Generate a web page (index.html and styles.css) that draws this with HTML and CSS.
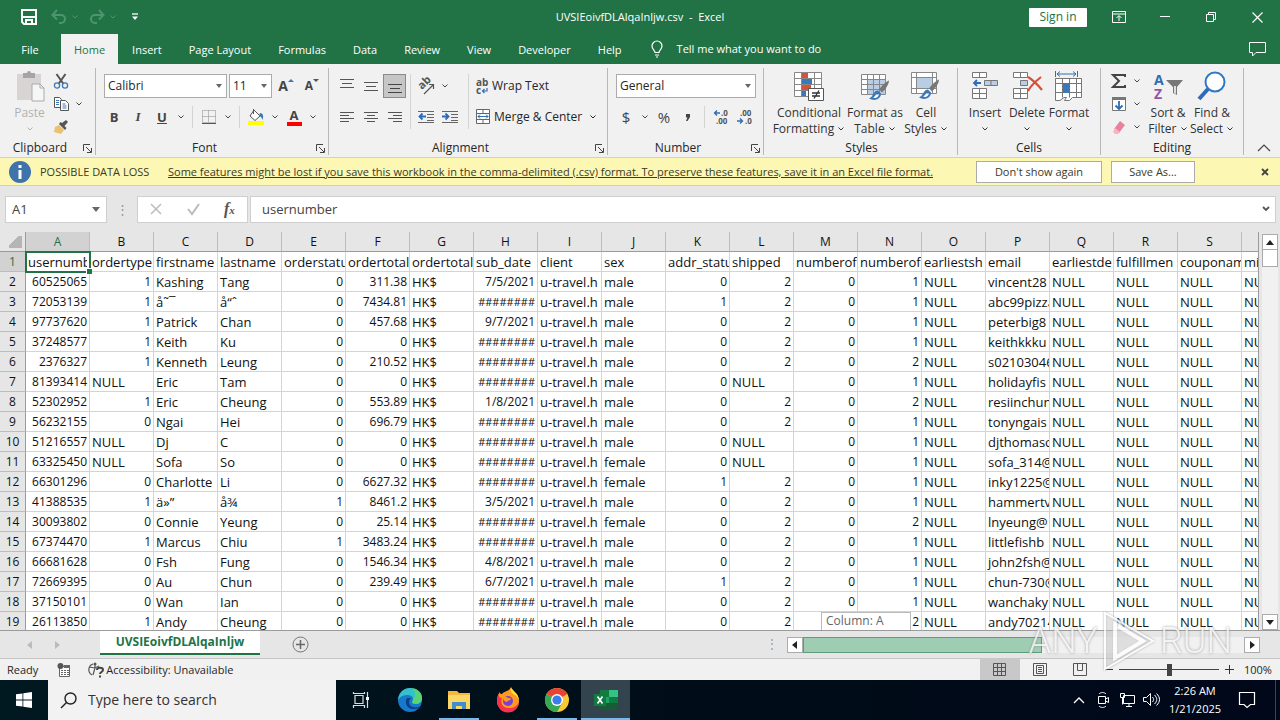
FILE: index.html
```html
<!DOCTYPE html>
<html lang="en">
<head>
    <meta charset="UTF-8">
    <meta name="viewport" content="width=device-width, initial-scale=1.0">
    <title>UVSIEoivfDLAlqaInljw.csv - Excel</title>
    <link rel="stylesheet" href="styles.css">
</head>

<body>
    <svg class="defs" aria-hidden="true">
        <symbol id="chev" viewBox="0 0 8 8"><path d="M1.500 2.500L4 5l2.500-2.500" fill="none" stroke="currentColor"/></symbol>
        <symbol id="launch" viewBox="0 0 9 9"><path d="M.5 7V.5H7M3 3l5 5M8.500 4v4.500H4" fill="none" stroke="currentColor"/></symbol>
        <symbol id="brush" viewBox="0 0 22 22"><path d="M21 1c-3 1-8 6-10 9l3 3c3-3 7-8 7-12z" fill="#777"/><path d="M10 11c-5 0-4 6-9 8 5 3 12 1 12-5z" fill="#3c78b8"/><path d="M8 15c-1 2-2 2-3 3 3 1 5 0 6-3z" fill="#fff"/></symbol>
    </svg>

    <header class="titlebar">
        <div class="quick">
            <button aria-label="Save"><svg width="16" height="16" viewBox="0 0 16 16"><path d="M1 1h14v14H3l-2-2z" fill="none" stroke="#fff" stroke-width="2"/><path d="M2 8h12M5 15v-4h6v4" fill="none" stroke="#fff" stroke-width="2"/></svg></button>
            <button class="dim" aria-label="Undo"><svg width="16" height="16" viewBox="0 0 16 16"><path d="M2 6h8a4 4 0 010 8H8M6 1L1.500 6 6 10.500" fill="none" stroke="currentColor" stroke-width="2"/></svg><svg width="8" height="8"><use href="#chev"/></svg></button>
            <button class="dim" aria-label="Redo"><svg width="16" height="16" viewBox="0 0 16 16"><path d="M14 6H6a4 4 0 000 8h2M10 1l4.500 5L10 10.500" fill="none" stroke="currentColor" stroke-width="2"/></svg><svg width="8" height="8"><use href="#chev"/></svg></button>
            <button aria-label="Customize"><svg width="8" height="8" viewBox="0 0 8 8"><path d="M1 1h6" stroke="#fff" stroke-width="1.300"/><path d="M1 3.500h6L4 7z" fill="#fff"/></svg></button>
        </div>
        <div class="doc-title">UVSIEoivfDLAlqaInljw.csv&nbsp; - &nbsp;Excel</div>
        <div class="window-buttons">
            <button class="sign-in">Sign in</button>
            <button aria-label="Ribbon display"><svg width="14" height="12" viewBox="0 0 14 12"><path d="M.5.500h13v11H.500zM.5 3h13M7 10V5M4.500 7L7 4.500 9.500 7" fill="none" stroke="#fff"/></svg></button>
            <button aria-label="Minimize"><svg width="10" height="10"><path d="M0 4.500h10" stroke="#fff"/></svg></button>
            <button aria-label="Restore"><svg width="10" height="10"><path d="M.5 2.500h7v7h-7zM2.500 2V.5h7v7H8" fill="none" stroke="#fff"/></svg></button>
            <button aria-label="Close"><svg width="11" height="11"><path d="M.5.500l10 10M10.500.500l-10 10" stroke="#fff" stroke-width="1.200"/></svg></button>
        </div>
    </header>

    <nav class="tabs">
        <button class="file">File</button>
        <button class="active">Home</button>
        <button>Insert</button>
        <button>Page Layout</button>
        <button>Formulas</button>
        <button>Data</button>
        <button>Review</button>
        <button>View</button>
        <button>Developer</button>
        <button>Help</button>
        <button class="tell"><svg width="12" height="18" viewBox="0 0 12 18"><path d="M4 12.500c0-2-3-3-3-6.500a5 5 0 0110 0c0 3.500-3 4.500-3 6.500zM4 15h4M5 17h2" fill="none" stroke="#fff" stroke-width="1.200"/></svg>Tell me what you want to do</button>
        <button class="comment" aria-label="Comments"><svg width="17" height="15" viewBox="0 0 17 15"><path d="M.5.500h16v10H7L3.500 14v-3.500h-3z" fill="none" stroke="#fff"/></svg></button>
    </nav>

    <section class="ribbon">
        <div class="group clipboard">
            <div class="group-body">
                <button class="big disabled">
                    <svg width="32" height="32" viewBox="0 0 32 32"><path d="M3 4h24v26H3z" fill="#d8d4d4"/><path d="M9 3h4a2 2 0 014 0h4v5H9z" fill="#a5a5a5"/><path d="M18 14h8l4 4v13H18z" fill="#f6f6f6" stroke="#aaa"/><path d="M26 14v4h4" fill="none" stroke="#aaa"/></svg>
                    <span>Paste</span><svg width="8" height="8"><use href="#chev"/></svg>
                </button>
                <div class="stack">
                    <button aria-label="Cut"><svg width="16" height="16" viewBox="0 0 16 16"><path d="M3.500 1l7 10M12.500 1l-7 10" stroke="#555" stroke-width="2"/><g fill="none" stroke="#3c78b8" stroke-width="1.300"><circle cx="4" cy="12.500" r="2.600"/><circle cx="12" cy="12.500" r="2.600"/></g></svg></button>
                    <button aria-label="Copy"><svg width="16" height="16" viewBox="0 0 16 16"><g fill="#fff" stroke="#555"><path d="M1.500 1.500h5l2 2v8h-7z"/><path d="M7.500 4.500h5l3 3v7h-8z"/></g><path d="M3 4.500h3M3 6.500h3M3 8.500h3M9.500 8h3M9.500 10h4M9.500 12h4" stroke="#3c78b8"/></svg><svg width="8" height="8"><use href="#chev"/></svg></button>
                    <button aria-label="Format Painter"><svg width="16" height="16" viewBox="0 0 16 16"><path d="M2 8l4-2 5 5-3 4-7-2z" fill="#ecc06c"/><path d="M6 5l6 6 1.500-2-2-2L15 3l-2-2-4 3-1.500-1z" fill="#555"/></svg></button>
                </div>
            </div>
            <div class="group-label"><span>Clipboard</span><button aria-label="Clipboard settings"><svg width="9" height="9"><use href="#launch"/></svg></button></div>
        </div>

        <div class="group font">
            <div class="group-body rows">
                <div class="row">
                    <select class="font-name" aria-label="Font"><option>Calibri</option></select>
                    <select class="font-size" aria-label="Font size"><option>11</option></select>
                    <button class="letter" aria-label="Increase font size"><b class="grow">A</b><svg width="6" height="14" viewBox="0 0 6 14"><path d="M0 4l3-3 3 3z" fill="#3c78b8"/></svg></button>
                    <button class="letter" aria-label="Decrease font size"><b>A</b><svg width="6" height="14" viewBox="0 0 6 14"><path d="M0 1h6L3 4z" fill="#555"/></svg></button>
                </div>
                <div class="row">
                    <button><b>B</b></button>
                    <button><b class="serif"><i>I</i></b></button>
                    <button><b><u>U</u></b></button>
                    <button class="drop" aria-label="Underline options"><svg width="8" height="8"><use href="#chev"/></svg></button>
                    <span class="sep"></span>
                    <button aria-label="Borders"><svg width="14" height="14" viewBox="0 0 14 14"><path d="M.5.500h13v12H.500zM6.500.500v12M.5 6.500h13" fill="none" stroke="#888" stroke-dasharray="1 1"/><path d="M0 13.500h14" stroke="#555"/></svg></button>
                    <button class="drop" aria-label="Border options"><svg width="8" height="8"><use href="#chev"/></svg></button>
                    <span class="sep"></span>
                    <button aria-label="Fill color"><svg width="18" height="18" viewBox="0 0 18 18"><path d="M7 2l6 6-5 4.500L3 8z" fill="#fff" stroke="#555"/><path d="M6.500 1v5" stroke="#555"/><path d="M13 5c3 0 4 3 2.500 7-1-3-2-4-3.500-4z" fill="#3c78b8"/><path d="M1 13h16v4H1z" fill="#ff0"/></svg></button>
                    <button class="drop" aria-label="Fill options"><svg width="8" height="8"><use href="#chev"/></svg></button>
                    <button class="color-a"><b>A</b></button>
                    <button class="drop" aria-label="Font color options"><svg width="8" height="8"><use href="#chev"/></svg></button>
                </div>
            </div>
            <div class="group-label"><span>Font</span><button aria-label="Font settings"><svg width="9" height="9"><use href="#launch"/></svg></button></div>
        </div>

        <div class="group alignment">
            <div class="group-body">
                <div class="rows">
                    <div class="row">
                        <button aria-label="Top align"><svg width="14" height="14"><path d="M0 .5h14M2 4.500h10M0 8.500h14" stroke="#555"/></svg></button>
                        <button aria-label="Middle align"><svg width="14" height="14"><path d="M0 3.500h14M2 7.500h10M0 11.500h14" stroke="#555"/></svg></button>
                        <button class="pressed" aria-label="Bottom align"><svg width="14" height="14"><path d="M0 5.500h14M2 9.500h10M0 13.500h14" stroke="#444"/></svg></button>
                    </div>
                    <div class="row">
                        <button aria-label="Align left"><svg width="14" height="14"><path d="M0 2.500h14M0 5.500h9M0 8.500h14M0 11.500h9" stroke="#555"/></svg></button>
                        <button aria-label="Center"><svg width="14" height="14"><path d="M0 2.500h14M3 5.500h8M0 8.500h14M3 11.500h8" stroke="#555"/></svg></button>
                        <button aria-label="Align right"><svg width="14" height="14"><path d="M0 2.500h14M5 5.500h9M0 8.500h14M5 11.500h9" stroke="#555"/></svg></button>
                    </div>
                </div>
                <div class="rows ruled">
                    <div class="row">
                        <button aria-label="Orientation"><svg width="18" height="18" viewBox="0 0 18 18"><text transform="translate(5 13) rotate(-45)" class="ab slant">ab</text><path d="M7 17l9-9M12 7.500h4.500V12" fill="none" stroke="#555" stroke-width="1.200"/></svg></button>
                        <button class="drop" aria-label="Orientation options"><svg width="8" height="8"><use href="#chev"/></svg></button>
                    </div>
                    <div class="row">
                        <button aria-label="Decrease indent"><svg width="16" height="14"><path d="M0 1.500h16M9 4.500h7M9 7.500h7M9 10.500h7M0 12.500h16" stroke="#666"/><path d="M8 6.500H1.500M4.500 3.500l-3 3 3 3" fill="none" stroke="#2f6cb5" stroke-width="1.800"/></svg></button>
                        <button aria-label="Increase indent"><svg width="16" height="14"><path d="M0 1.500h16M9 4.500h7M9 7.500h7M9 10.500h7M0 12.500h16" stroke="#666"/><path d="M0 6.500h6.500M3.500 3.500l3 3-3 3" fill="none" stroke="#2f6cb5" stroke-width="1.800"/></svg></button>
                    </div>
                </div>
                <div class="rows ruled">
                    <button class="wide"><svg width="14" height="16" viewBox="0 0 14 16"><text x="1" y="8" class="ab">ab</text><text x="1" y="16" class="ab">c</text><path d="M12 10v3H7.500M9.500 11l-2 2 2 2" fill="none" stroke="#2f6cb5" stroke-width="1.200"/></svg>Wrap Text</button>
                    <button class="wide"><svg width="16" height="16" viewBox="0 0 16 16"><path d="M1.500.500h13v14h-13zM1.500 4.500h13M1.500 10.500h13M8 .5v4M8 10.500v4" fill="#fff" stroke="#666"/><path d="M3 7.500h10M5 5.500l-2 2 2 2M11 5.500l2 2-2 2" fill="none" stroke="#2f6cb5"/></svg>Merge &amp; Center<svg class="far" width="8" height="8"><use href="#chev"/></svg></button>
                </div>
            </div>
            <div class="group-label"><span>Alignment</span><button aria-label="Alignment settings"><svg width="9" height="9"><use href="#launch"/></svg></button></div>
        </div>

        <div class="group number">
            <div class="group-body rows">
                <div class="row"><select class="format" aria-label="Number format"><option>General</option></select></div>
                <div class="row">
                    <button class="sign">$</button>
                    <button class="drop" aria-label="Currency options"><svg width="8" height="8"><use href="#chev"/></svg></button>
                    <button class="sign">%</button>
                    <button class="sign comma" aria-label="Comma style"><svg width="6" height="9"><path d="M1 1h4v3L2.500 8H1l1.500-3.500H1z" fill="#444"/></svg></button>
                    <span class="sep"></span>
                    <button aria-label="Increase decimal"><svg width="16" height="16" viewBox="0 0 16 16"><text x="8" y="7" class="dec">.0</text><text x="3" y="15" class="dec">.00</text><path d="M7 4H1.500M4 1.500L1.500 4 4 6.500" fill="none" stroke="#2f6cb5" stroke-width="1.300"/></svg></button>
                    <button aria-label="Decrease decimal"><svg width="16" height="16" viewBox="0 0 16 16"><text x="3" y="7" class="dec">.00</text><text x="8" y="15" class="dec">.0</text><path d="M0 12h5.500M3 9.500L5.500 12 3 14.500" fill="none" stroke="#2f6cb5" stroke-width="1.300"/></svg></button>
                </div>
            </div>
            <div class="group-label"><span>Number</span><button aria-label="Number settings"><svg width="9" height="9"><use href="#launch"/></svg></button></div>
        </div>

        <div class="group styles">
            <div class="group-body">
                <button class="big cond">
                    <svg width="32" height="32" viewBox="0 0 32 32"><path d="M1.500 2.500h27v24h-27zM1.500 8.500h27M1.500 14.500h27M1.500 20.500h27M8.500 2.500v24M21.500 2.500v24" fill="#fff" stroke="#888"/><path d="M9 3h6v5H9zM9 15h9v5H9z" fill="#d6503a"/><path d="M9 9h10v5H9zM9 21h4v5H9z" fill="#3c78b8"/><path d="M15.500 18.500h15v12h-15z" fill="#fff" stroke="#555"/><path d="M19 23h8M19 26h8M26 20.500l-5 8" stroke="#333" stroke-width="1.300"/></svg>
                    <span>Conditional<br>Formatting <svg width="8" height="8"><use href="#chev"/></svg></span>
                </button>
                <button class="big as-table">
                    <svg width="32" height="32" viewBox="0 0 32 32"><path d="M2.500 4.500h24v20h-24z" fill="#fff"/><path d="M9 10h17v14H9z" fill="#b9cee4"/><path d="M2.500 4.500h24v20h-24zM2.500 9.500h24M2.500 14.500h24M2.500 19.500h24M8.500 4.500v20M14.500 4.500v20M20.500 4.500v20" fill="none" stroke="#888"/><use href="#brush" x="9" y="9" width="22" height="23"/></svg>
                    <span>Format as<br>Table <svg width="8" height="8"><use href="#chev"/></svg></span>
                </button>
                <button class="big">
                    <svg width="32" height="32" viewBox="0 0 32 32"><path d="M1.500 2.500h25v21h-25zM1.500 7.500h25M1.500 18.500h25M6.500 2.500v21M22.500 2.500v21" fill="#fff" stroke="#888"/><path d="M7 8h15v10H7z" fill="#b9cee4"/><use href="#brush" x="8" y="8" width="22" height="23"/></svg>
                    <span>Cell<br>Styles <svg width="8" height="8"><use href="#chev"/></svg></span>
                </button>
            </div>
            <div class="group-label"><span>Styles</span></div>
        </div>

        <div class="group cells">
            <div class="group-body">
                <button class="big">
                    <svg width="32" height="32" viewBox="0 0 32 32"><g fill="#fff" stroke="#777"><path d="M3.500 2.500h14v5h-14zM10.500 2.500v5"/><path d="M3.500 18.500h14v10h-14zM10.500 18.500v10M3.500 23.500h14"/></g><path d="M15.500 10.500h13v5h-13zM22 10.500v5" fill="#b9cee4" stroke="#777"/><path d="M12 13H5M8 10l-3 3 3 3" fill="none" stroke="#2f6cb5" stroke-width="1.800"/></svg>
                    <span>Insert</span><svg width="8" height="8"><use href="#chev"/></svg>
                </button>
                <button class="big">
                    <svg width="32" height="32" viewBox="0 0 32 32"><g fill="#fff" stroke="#777"><path d="M2.500 2.500h14v5h-14zM9.500 2.500v5"/><path d="M2.500 18.500h14v10h-14zM9.500 18.500v10M2.500 23.500h14"/></g><path d="M9.500 10.500h7v5h-7z" fill="#b9cee4" stroke="#777"/><path d="M17 7c5 3 10 8 14 13M30 7c-5 4-10 8-13 14" fill="none" stroke="#d6503a" stroke-width="2.200"/></svg>
                    <span>Delete</span><svg width="8" height="8"><use href="#chev"/></svg>
                </button>
                <button class="big">
                    <svg width="32" height="32" viewBox="0 0 32 32"><path d="M2.500 1v6M24.500 1v6M4 4h19M7 1.500L4 4l3 2.500M20 1.500L23 4l-3 2.500" fill="none" stroke="#2f6cb5"/><path d="M2.500 8.500h26v19h-9l-3 3h-5l2-3H11l-4 3H2.500zM2.500 13.500h26M2.500 22.500h26M9.500 8.500v19M16.500 8.500v19M23.500 8.500v19" fill="#fff" stroke="#777"/><path d="M10 13h7v10h-7z" fill="#3c78b8"/></svg>
                    <span>Format</span><svg width="8" height="8"><use href="#chev"/></svg>
                </button>
            </div>
            <div class="group-label"><span>Cells</span></div>
        </div>

        <div class="group editing">
            <div class="group-body">
                <div class="stack">
                    <button aria-label="AutoSum"><svg width="16" height="16" viewBox="0 0 16 16"><path d="M14 4V2H2l6 6-6 6h12v-2" fill="none" stroke="#444" stroke-width="2"/></svg><svg width="8" height="8"><use href="#chev"/></svg></button>
                    <button aria-label="Fill"><svg width="16" height="16" viewBox="0 0 16 16"><path d="M1.500 1.500h13v13h-13z" fill="#fff" stroke="#777"/><path d="M1 1h14v3H1z" fill="#777"/><path d="M8 5v8M4.500 9.500L8 13l3.500-3.500" fill="none" stroke="#2f6cb5" stroke-width="1.800"/></svg><svg width="8" height="8"><use href="#chev"/></svg></button>
                    <button aria-label="Clear"><svg width="16" height="16" viewBox="0 0 16 16"><path d="M9 2l5 4-6 8-5-4z" fill="#e8829c"/><path d="M4 9l5 4-2 2H4l-2-2z" fill="#f3b7c4"/></svg><svg width="8" height="8"><use href="#chev"/></svg></button>
                </div>
                <button class="big">
                    <svg width="32" height="32" viewBox="0 0 32 32"><text x="2" y="15" class="sort-a">A</text><text x="2" y="29" class="sort-z">Z</text><path d="M14 10h17l-6 7v8l-4-2v-6z" fill="#777"/><path d="M22 16v7l2 1v-8z" fill="#ddd"/></svg>
                    <span>Sort &amp;<br>Filter <svg width="8" height="8"><use href="#chev"/></svg></span>
                </button>
                <button class="big">
                    <svg width="32" height="32" viewBox="0 0 32 32"><circle cx="19" cy="12" r="9.500" fill="#fff" stroke="#2f78c4" stroke-width="2"/><path d="M12 19L3 29" stroke="#2f6cb5" stroke-width="4"/></svg>
                    <span>Find &amp;<br>Select <svg width="8" height="8"><use href="#chev"/></svg></span>
                </button>
            </div>
            <div class="group-label"><span>Editing</span></div>
        </div>
        <button class="collapse" aria-label="Collapse ribbon"><svg width="14" height="8"><path d="M1 7l6-6 6 6" fill="none" stroke="#444" stroke-width="1.200"/></svg></button>
    </section>

    <section class="message">
        <svg width="24" height="24" viewBox="0 0 24 24"><circle cx="12" cy="12" r="11" fill="#3f73ac"/><path d="M12 5v3M12 10v9" stroke="#fff" stroke-width="3"/></svg>
        <strong>POSSIBLE DATA LOSS</strong>
        <div class="message-text"><a href="#">Some features might be lost if you save this workbook in the comma-delimited (.csv) format. To preserve these features, save it in an Excel file format.</a></div>
        <button class="again">Don't show again</button>
        <button class="save-as">Save As...</button>
        <button class="close" aria-label="Close message"><svg width="8" height="8"><path d="M1 1l6 6M7 1L1 7" stroke="#444" stroke-width="1.800"/></svg></button>
    </section>

    <section class="formula-bar">
        <div class="name-box">
            <input type="text" value="A1" aria-label="Name box">
            <button aria-label="Names"><svg width="8" height="5"><path d="M0 0h8L4 5z" fill="#666"/></svg></button>
        </div>
        <span class="grip">⋮</span>
        <div class="fx">
            <button aria-label="Cancel"><svg width="12" height="12"><path d="M1 1l10 10M11 1L1 11" stroke="#bbb" stroke-width="1.500"/></svg></button>
            <button aria-label="Enter"><svg width="13" height="12"><path d="M1 6l4 5 7-10" fill="none" stroke="#bbb" stroke-width="2"/></svg></button>
            <button class="fx-label"><i>f<small>x</small></i></button>
        </div>
        <div class="formula">
            <input type="text" value="usernumber" aria-label="Formula">
            <button aria-label="Expand formula bar"><svg width="8" height="6"><path d="M1 1l3 3 3-3" fill="none" stroke="#555" stroke-width="1.800"/></svg></button>
        </div>
    </section>

    <main class="sheet-area">
        <div class="sheet">
            <table>
                <thead><tr id="letters"></tr></thead>
                <tbody id="cells"></tbody>
            </table>
            <div class="hint">Column: A</div>
        </div>
        <div class="v-scroll">
            <button aria-label="Scroll up"><svg width="8" height="5"><path d="M0 5h8L4 0z" fill="#222"/></svg></button>
            <div class="v-thumb"></div>
            <div class="v-track"></div>
            <button aria-label="Scroll down"><svg width="8" height="5"><path d="M0 0h8L4 5z" fill="#222"/></svg></button>
        </div>
    </main>

    <footer class="sheet-tabs">
        <button class="arrow" aria-label="Previous sheet"><svg width="5" height="8"><path d="M5 0v8L0 4z" fill="#bbb"/></svg></button>
        <button class="arrow" aria-label="Next sheet"><svg width="5" height="8"><path d="M0 0v8l5-4z" fill="#bbb"/></svg></button>
        <button class="sheet-tab">UVSIEoivfDLAlqaInljw</button>
        <button class="add" aria-label="New sheet"><svg width="17" height="17"><path d="M8.500 4v9M4 8.500h9" stroke="#666" stroke-width="1.500"/><circle cx="8.500" cy="8.500" r="7.500" fill="none" stroke="#777"/></svg></button>
        <span class="grip">⋮</span>
        <div class="h-scroll">
            <button aria-label="Scroll left"><svg width="5" height="8"><path d="M5 0v8L0 4z" fill="#222"/></svg></button>
            <div class="h-thumb"></div>
            <div class="h-track"></div>
            <button aria-label="Scroll right"><svg width="5" height="8"><path d="M0 0v8l5-4z" fill="#222"/></svg></button>
        </div>
    </footer>

    <footer class="status">
        <span class="ready">Ready</span>
        <svg class="macro" width="14" height="14" viewBox="0 0 14 14"><path d="M2.500 3.500h10v10h-10z" fill="#fff" stroke="#666"/><path d="M7 2h6v3H7z" fill="#666"/><path d="M4 7.500h2M7 7.500h2M10 7.500h2M4 9.500h2M7 9.500h2M10 9.500h2M4 11.500h2M7 11.500h2M10 11.500h2" stroke="#666"/><circle cx="3.500" cy="3" r="3" fill="#555"/></svg>
        <svg class="access" width="18" height="16" viewBox="0 0 18 16"><path d="M6 2a6 6 0 00-1 11M2 5l6 1 4-2M8 2v4l-2 7" fill="none" stroke="#555" stroke-width="1.200"/><circle cx="8" cy="2" r="1.500" fill="#555"/><path d="M10 8c0-3 6-3 6 0 0 2-3 2-3 4M13 13.500v2" fill="none" stroke="#444" stroke-width="2"/></svg>
        <span>Accessibility: Unavailable</span>
        <div class="views">
            <button class="on" aria-label="Normal"><svg width="14" height="13"><path d="M.5.500h12v12H.500zM.5 4.500h12M.5 8.500h12M4.500.500v12M8.500.500v12" fill="none" stroke="#555"/></svg></button>
            <button aria-label="Page layout"><svg width="14" height="13"><path d="M.5.500h13v12H.500zM3.500 2.500h7v8h-7zM5 4.500h4M5 6.500h4M5 8.500h4" fill="none" stroke="#555"/></svg></button>
            <button aria-label="Page break preview"><svg width="14" height="13"><path d="M.5.500h13v12H.500zM4.500.500v7h5v-7" fill="none" stroke="#555"/></svg></button>
        </div>
        <div class="zoom">
            <button aria-label="Zoom out"><svg width="8" height="8"><path d="M0 3.500h8" stroke="#333"/></svg></button>
            <input type="range" min="0" max="200" value="100" aria-label="Zoom">
            <button aria-label="Zoom in"><svg width="9" height="9"><path d="M0 4.500h9M4.500 0v9" stroke="#333"/></svg></button>
            <button class="percent">100%</button>
        </div>
    </footer>

    <div class="taskbar">
        <button class="start" aria-label="Start"><svg width="16" height="16" viewBox="0 0 16 16"><path d="M0 2.300l6.500-.9v6.200H0zM7.300 1.300L16 0v7.600H7.300zM0 8.400h6.500v6.200L0 13.700zM7.300 8.400H16V16l-8.700-1.300z" fill="#fff"/></svg></button>
        <label class="search"><svg width="17" height="17"><circle cx="10.500" cy="6.500" r="5.500" fill="none" stroke="#222" stroke-width="1.400"/><path d="M6.500 10.500L1 16" stroke="#222" stroke-width="1.400"/></svg><input type="text" placeholder="Type here to search"></label>
        <button class="app" aria-label="Task view"><svg width="18" height="18" viewBox="0 0 18 18"><path d="M3 4.500h8v8H3zM1.500 1v1.500h11V1M1.500 17v-2.500h11V17M15.500 1v16" fill="none" stroke="#ddd" stroke-width="1.200"/><path d="M14 6h3v3h-3z" fill="#fff"/></svg></button>
        <button class="app" aria-label="Edge"><svg width="26" height="26" viewBox="0 0 26 26"><circle cx="13" cy="13" r="12" fill="#1778cc"/><path d="M1 13C2 5 7 1 13 1c8 0 12 5 12 10 0 4-3 6-6 6-3 0-4-1-4-2 0-1 1-1 1-3 0-3-3-4-6-4-5 0-8 3-9 5z" fill="#35c1c9"/><path d="M15 1.200C21 2 25 6 25 11c0 4-3 6-6 6-3 0-4-1-4-2 0-1 1-1 1-3 3-2 3-7-1-10.800z" fill="#62d95a" opacity=".75"/><path d="M10 11c-3 5 0 12 8 11 2 0 4-1 5-3-5 3-11 1-11-4 0-2 1-3 2-4z" fill="#0b3f8c"/></svg></button>
        <button class="app open" aria-label="File Explorer"><svg width="22" height="20" viewBox="0 0 22 20"><path d="M0 1h9l2 2h11v16H0z" fill="#f5b83a"/><path d="M0 5h22v14H0z" fill="#fdd765"/><path d="M4 19v-7h14v7h-4v-3H8v3z" fill="#3e8fcb"/></svg></button>
        <button class="app" aria-label="Firefox"><svg width="24" height="26" viewBox="0 0 24 26"><path d="M15 0c0 3 8 6 8 14a11 11 0 01-22 0c0-4 1-7 3-9 0 2 1 2 2 2 2-3 7-2 9-7z" fill="#ff9a1f"/><path d="M1 14a11 11 0 0022 1c-2 4-5 6-10 6-6 0-9-4-7-10-3 0-4-2-2-5-2 2-3 5-3 8z" fill="#f5334f"/><path d="M15 0c0 3 8 6 8 14-1-4-3-6-6-7-2-2-3-4-2-7z" fill="#ffdf3c"/><circle cx="12" cy="14" r="5" fill="#7a42d4"/><path d="M7 10c2-1 4 0 5 1 2 0 3 0 3 1-1 2-3 1-4 3-2 0-4-2-4-5z" fill="#ff9a1f"/></svg></button>
        <button class="app open" aria-label="Chrome"><svg width="24" height="24" viewBox="0 0 24 24"><circle cx="12" cy="12" r="12" fill="#fcc934"/><path d="M12 12L1.600 6A12 12 0 0122.400 6z" fill="#ea4335"/><path d="M12 12L1.600 6a12 12 0 0010.400 18l5.200-9z" fill="#34a853"/><circle cx="12" cy="12" r="6" fill="#fff"/><circle cx="12" cy="12" r="4.600" fill="#3b7ded"/></svg></button>
        <button class="app current" aria-label="Excel"><svg width="24" height="22" viewBox="0 0 24 22"><path d="M6 1h18v20H6z" fill="#21a366"/><path d="M6 1h9v7H6z" fill="#107c41"/><path d="M15 1h9v7h-9z" fill="#33c481"/><path d="M6 14h18v7H6z" fill="#185c37"/><path d="M15 8h9v6h-9z" fill="#107c41"/><path d="M0 5h12v12H0z" fill="#107c41"/><path d="M3.500 7.500l5 7M8.500 7.500l-5 7" stroke="#fff" stroke-width="1.600"/></svg></button>
        <div class="tray">
            <button aria-label="Hidden icons"><svg width="12" height="8"><path d="M1 7l5-5 5 5" fill="none" stroke="#fff" stroke-width="1.300"/></svg></button>
            <button aria-label="Meet now"><svg width="14" height="18"><path d="M2.500 5.500h7v7h-7zM9.500 8l3-1.500v5l-3-1.500M3 3c2-2 5-2 7 0M3 15c2 2 5 2 7 0" fill="none" stroke="#fff"/></svg></button>
            <button aria-label="Network"><svg width="17" height="16"><path d="M4.500 3.500h11v8h-11zM10 11.500v3M7 14.500h6M1.500 1.500h4v4h-4zM3.500 5.500v7" fill="none" stroke="#fff"/></svg></button>
            <button aria-label="Volume"><svg width="18" height="16"><path d="M1.500 5.500h3l4-4v12l-4-4h-3zM10.500 5c1.500 2 1.500 3 0 5M12.500 3c3 3 3 6 0 9M14.500 1.500c4 4 4 8 0 12" fill="none" stroke="#fff"/></svg></button>
            <div class="clock">2:26 AM<br>1/21/2025</div>
            <button class="action" aria-label="Notifications"><svg width="16" height="17"><path d="M.5.500h15v12h-4L8 15.500 5 12.500H.500z" fill="none" stroke="#fff" stroke-width="1.200"/></svg></button>
        </div>
    </div>

    <div class="watermark" aria-hidden="true">
        <span>ANY</span>
        <svg width="56" height="62" viewBox="0 0 56 62"><path d="M4 3v56l48-28z" fill="#ddd" fill-opacity=".35" stroke="#fff" stroke-width="2"/><path d="M14 14v34l28-17z" fill="#fff" fill-opacity=".3" stroke="#fff" stroke-width="4"/></svg>
        <span>RUN</span>
    </div>

    <script src="script.js"></script>
</body>
</html>
```
FILE: styles.css
```css
* {
    box-sizing: border-box;
}

body {
    margin: 0;
    height: 100vh;
    display: flex;
    flex-direction: column;
    overflow: hidden;
    background-color: #e6e6e6;
    color: #262626;
    font-family: "Open Sans", "Noto Sans", sans-serif;
    font-size: 12px;
    line-height: 16px;
    white-space: nowrap;
}

button,
input,
select {
    font: inherit;
    color: inherit;
    margin: 0;
    padding: 0;
    border: 0;
    border-radius: 0;
    background: none;
    outline: none;
}

button {
    display: flex;
    align-items: center;
    justify-content: center;
    flex-shrink: 0;
}

svg {
    flex-shrink: 0;
    overflow: visible;
}

.defs {
    position: absolute;
    width: 0;
    height: 0;
}

/* title bar */
.titlebar {
    height: 34px;
    flex-shrink: 0;
    display: grid;
    grid-template-columns: 1fr auto 1fr;
    align-items: center;
    background-color: #217346;
    color: #fff;
    font-size: 11px;
}

.quick {
    display: flex;
    align-items: center;
    gap: 14px;
    padding-left: 21px;
}

.quick .dim {
    color: #4f9470;
    gap: 4px;
    margin-right: -4px;
}

.quick button:last-child {
    margin-left: 4px;
}

.window-buttons {
    display: flex;
    justify-content: flex-end;
    align-items: center;
}

.window-buttons button {
    width: 46px;
    height: 30px;
}

.window-buttons .sign-in {
    width: 58px;
    height: 19px;
    margin-right: 9px;
    background-color: #fff;
    color: #217346;
    font-size: 12px;
    border-radius: 1px;
}

/* ribbon tabs */
.tabs {
    height: 30px;
    flex-shrink: 0;
    display: flex;
    gap: 1px;
    background-color: #217346;
    color: #fff;
    font-size: 11px;
}

.tabs button {
    padding: 1px 13px 0;
}

.tabs .file {
    width: 60px;
}

.tabs .active {
    background-color: #f1f1f1;
    color: #217346;
}

.tabs .tell {
    padding: 0 15px;
    gap: 14px;
}

.tabs .comment {
    margin-left: auto;
    padding-right: 14px;
}

/* ribbon */
.ribbon {
    height: 93px;
    flex-shrink: 0;
    display: flex;
    padding: 4px 0 2px;
    background-color: #f1f1f1;
}

.ribbon button {
    color: #444;
}

.group {
    display: flex;
    flex-direction: column;
    padding-left: 6px;
    border-right: 1px solid #b8b8b8;
}

.clipboard { flex: 0 0 96px; }
.font { flex: 0 0 233px; }
.alignment { flex: 0 0 279px; }
.number { flex: 0 0 156px; }
.styles { flex: 0 0 194px; }
.cells { flex: 0 0 143px; }
.editing { flex: 0 0 143px; }

.group-body {
    flex: 1;
    display: flex;
    align-items: flex-start;
}

.group-label {
    height: 14px;
    display: flex;
    align-items: center;
    color: #262626;
    margin-left: -6px;
}

.group-label span {
    flex: 1;
    text-align: center;
}

.group-label button {
    width: 15px;
    height: 14px;
}

.rows {
    display: flex;
    flex-direction: column;
    align-items: flex-start;
    gap: 7px;
    padding-top: 6px;
}

.row {
    display: flex;
    align-items: center;
    height: 24px;
}

.row button {
    width: 24px;
    height: 24px;
}

.row .drop {
    width: 14px;
}

.row b {
    font-size: 13px;
}

.sep {
    width: 1px;
    height: 22px;
    margin: 0 4px;
    background-color: #d4d4d4;
}

.ruled {
    margin: 6px 0 0 3px;
    padding: 0 3px;
    border-left: 1px solid #d4d4d4;
}

.ribbon select {
    height: 24px;
    padding-left: 3px;
    border: 1px solid #ababab;
    color: #262626;
    appearance: none;
    background: #fff url("data:image/svg+xml,%3Csvg xmlns='http://www.w3.org/2000/svg' width='6' height='4'%3E%3Cpath d='M0 0h6L3 4z' fill='%23666'/%3E%3C/svg%3E") no-repeat right 4px center;
}

.font .row:first-child {
    gap: 2px;
    padding-left: 2px;
}

.ribbon .font-name {
    width: 123px;
}

.ribbon .font-size {
    width: 43px;
}

.letter svg {
    align-self: flex-start;
    margin-top: 4px;
}

.row .letter b {
    font-size: 12px;
}

.row .letter .grow {
    font-size: 14px;
}

.serif {
    font-family: "Liberation Serif", serif;
}

.color-a b {
    width: 15px;
    height: 17px;
    line-height: 13px;
    border-bottom: 4px solid #f00;
}

.row .pressed {
    background-color: #c6c6c6;
    border: 1px solid #8a8a8a;
    width: 23px;
}

.ab {
    font: bold 10px "Open Sans", sans-serif;
    fill: #555;
}

.slant {
    font-size: 11px;
}

.dec {
    font: bold 8px "Open Sans", sans-serif;
    fill: #555;
}

.wide {
    height: 24px;
    gap: 3px;
    padding-left: 3px;
}

.ribbon .wide {
    color: #262626;
}

.far {
    margin-left: 4px;
}

.ribbon .format {
    width: 140px;
    margin-left: 2px;
}

.row .sign {
    font-size: 15px;
}

.stack {
    display: flex;
    flex-direction: column;
    align-items: flex-start;
    padding-top: 1px;
}

.stack button {
    height: 23px;
    gap: 6px;
}

.big {
    flex-direction: column;
    justify-content: flex-start;
    width: 44px;
    padding-top: 2px;
}

.big > svg:first-child {
    margin-bottom: 3px;
}

.big > svg:last-child {
    margin-top: 4px;
}

.ribbon .big {
    color: #333;
}

.ribbon .disabled {
    color: #b1b1b1;
    width: 47px;
}

.cells .big {
    width: 42px;
}

.styles {
    padding-left: 8px;
}

.ribbon .cond {
    width: 74px;
}

.ribbon .as-table {
    width: 58px;
}

.editing .stack {
    width: 39px;
    padding-left: 4px;
}

.sort-a {
    font: bold 14px "Open Sans", sans-serif;
    fill: #2f6cb5;
}

.sort-z {
    font: bold 14px "Open Sans", sans-serif;
    fill: #9355a8;
}

.collapse {
    margin-left: auto;
    align-self: flex-end;
    width: 32px;
    height: 14px;
}

/* message bar */
.message {
    height: 29px;
    flex-shrink: 0;
    display: flex;
    align-items: center;
    padding: 0 8px;
    background-color: #fdf7b4;
    border-top: 1px solid #d9d3a0;
    border-bottom: 1px solid #d9d3a0;
    font-size: 11px;
    color: #3b3a24;
}

.message strong {
    width: 120px;
    font-weight: normal;
    margin: 0 8px;
}

.message-text {
    width: 787px;
}

.message a {
    color: inherit;
}

.message .again,
.message .save-as {
    height: 22px;
    background-color: #fff;
    border: 1px solid #ababab;
}

.message .again {
    width: 126px;
    margin: 0 9px 0 21px;
}

.message .save-as {
    width: 84px;
}

.message .close {
    width: 14px;
    margin-left: auto;
}

/* formula bar */
.formula-bar {
    height: 46px;
    flex-shrink: 0;
    display: flex;
    align-items: center;
    padding: 0 4px 0 5px;
    font-size: 13px;
    color: #444;
}

.name-box,
.fx,
.formula {
    height: 27px;
    display: flex;
    background-color: #fff;
    border: 1px solid #cfcfcf;
}

.name-box {
    width: 102px;
}

.name-box input {
    width: 80px;
    padding-left: 6px;
}

.name-box button {
    width: 20px;
}

.grip {
    width: 30px;
    text-align: center;
    color: #999;
}

.fx {
    width: 111px;
    justify-content: space-around;
}

.fx-label {
    font-family: "Liberation Serif", serif;
    font-weight: bold;
    font-size: 16px;
    color: #555;
}

.fx-label small {
    font-size: 11px;
}

.formula {
    flex: 1;
    margin-left: 2px;
}

.formula input {
    flex: 1;
    padding-left: 11px;
}

.formula button {
    width: 18px;
}

/* grid */
.sheet-area {
    flex: 1;
    min-height: 0;
    display: flex;
    border-bottom: 1px solid #9b9b9b;
}

.sheet {
    flex: 1;
    min-width: 0;
    position: relative;
    overflow: hidden;
    border-right: 1px solid #9b9b9b;
}

table {
    table-layout: fixed;
    width: max-content;
    border-collapse: separate;
    border-spacing: 0;
    color: #111;
}

th,
td {
    width: 64px;
    min-width: 64px;
    max-width: 64px;
    height: 20px;
    padding: 1px 2px 0;
    overflow: hidden;
    line-height: 18px;
    border-right: 1px solid #d4d4d4;
    border-bottom: 1px solid #d4d4d4;
}

th {
    font-weight: normal;
    background-color: #e6e6e6;
    border-color: #bdbdbd;
}

thead th {
    border-bottom-color: #9b9b9b;
}

th:first-child {
    width: 26px;
    min-width: 26px;
    max-width: 26px;
    padding: 1px 0 0;
    border-right-color: #9b9b9b;
}

.corner {
    background: linear-gradient(135deg, #e6e6e6 50%, #b5b5b5 50%);
    background-clip: content-box;
}

thead .corner:first-child {
    padding: 4px 3px 3px 9px;
}

th.chosen {
    background-color: #d2d2d2;
    color: #217346;
}

td {
    background-color: #fff;
    font-size: 13px;
}

td.num {
    text-align: right;
    font-size: 12px;
}

td.hash {
    text-align: right;
    font-size: 11px;
}

td.cursor {
    position: relative;
    overflow: visible;
    outline: 2px solid #217346;
    outline-offset: -1px;
}

td.cursor div {
    overflow: hidden;
}

td.cursor::after {
    content: "";
    position: absolute;
    right: -3px;
    bottom: -3px;
    width: 5px;
    height: 5px;
    background-color: #217346;
    border: 1px solid #fff;
    border-width: 1px 0 0 1px;
    box-sizing: content-box;
}

.hint {
    position: absolute;
    left: 821px;
    bottom: 0;
    width: 90px;
    height: 18px;
    padding-left: 4px;
    background-color: #fff;
    border: 1px solid #bbb;
    border-bottom: 0;
    color: #666;
}

.v-scroll {
    width: 21px;
    display: flex;
    flex-direction: column;
    padding: 2px 2px 0 3px;
}

.v-scroll button,
.h-scroll button {
    width: 16px;
    height: 16px;
    background-color: #fff;
    border: 1px solid #ababab;
}

.v-thumb {
    width: 16px;
    height: 17px;
    background-color: #fff;
    border: 1px solid #ababab;
    border-top: 0;
}

.v-track {
    flex: 1;
    width: 16px;
    background-color: #f1f1f1;
}

/* sheet tabs */
.sheet-tabs {
    height: 28px;
    flex-shrink: 0;
    display: flex;
    padding: 0 20px 0 15px;
    border-bottom: 1px solid #c6c6c6;
}

.arrow {
    width: 28px;
}

.sheet-tab {
    height: 24px;
    width: 160px;
    margin-left: 29px;
    background-color: #fff;
    border-bottom: 2px solid #217346;
    color: #217346;
    font-weight: bold;
}

.add {
    margin-left: 32px;
}

.sheet-tabs .grip {
    margin-left: auto;
    line-height: 26px;
}

.h-scroll {
    width: 38%;
    max-width: 475px;
    display: flex;
    align-items: center;
}

.h-thumb {
    flex: 54;
    height: 16px;
    background-color: #9fcdb3;
    border: 1px solid #5f9a7a;
}

.h-track {
    flex: 46;
    height: 16px;
    background-color: #f1f1f1;
}

/* status bar */
.status {
    height: 21px;
    flex-shrink: 0;
    display: flex;
    align-items: center;
    padding-left: 7px;
    background-color: #f1f1f1;
    font-size: 11px;
}

.macro {
    margin: 0 16px 0 19px;
}

.access {
    margin-right: 1px;
}

.views {
    display: flex;
    margin-left: auto;
    height: 21px;
}

.views button {
    width: 40px;
}

.views .on {
    background-color: #c8c8c8;
}

.zoom {
    display: flex;
    align-items: center;
    gap: 6px;
    width: 180px;
    padding-left: 5px;
}

.zoom input {
    width: 100px;
    height: 12px;
    appearance: none;
    background: linear-gradient(#444, #444) no-repeat center / 100% 1px;
}

.zoom input::-webkit-slider-thumb {
    appearance: none;
    width: 5px;
    height: 12px;
    background-color: #444;
}

.percent {
    margin-left: 4px;
}

/* taskbar */
.taskbar {
    height: 40px;
    flex-shrink: 0;
    display: flex;
    background: linear-gradient(90deg, #001820, #000c18 60%, #00081a);
    color: #fff;
}

.start {
    width: 48px;
}

.search {
    width: 288px;
    display: flex;
    align-items: center;
    gap: 11px;
    padding-left: 12px;
    background-color: #f2f2f2;
    color: #222;
}

.search input {
    flex: 1;
    min-width: 0;
    font-size: 14px;
}

.search input::placeholder {
    color: #333;
    opacity: 1;
}

.app {
    width: 49px;
}

.open {
    background: linear-gradient(#76b9ed, #76b9ed) no-repeat center bottom / 40px 2px;
}

.current {
    background: #33444f linear-gradient(#76b9ed, #76b9ed) no-repeat center bottom / 100% 2px;
}

.tray {
    margin-left: auto;
    display: flex;
    align-items: center;
    padding-right: 4px;
}

.tray button {
    width: 24px;
    height: 40px;
}

.clock {
    width: 64px;
    text-align: center;
    line-height: 18px;
    font-size: 11px;
}

.tray .action {
    width: 49px;
    padding-right: 8px;
    border-right: 1px solid #3a4550;
}

/* logo that lies over the lower right corner */
.watermark {
    position: absolute;
    right: 48px;
    bottom: 48px;
    display: flex;
    align-items: center;
    gap: 3px;
    color: #f4f4f4;
    opacity: 0.8;
    font-family: Roboto, sans-serif;
    font-weight: 300;
    font-size: 36px;
    line-height: 60px;
    text-shadow: 0 0 3px #888;
    pointer-events: none;
}

.watermark svg {
    filter: drop-shadow(0 0 1px #999);
}
```
FILE: script.js
```javascript
const heads = ['usernumber', 'ordertype', 'firstname', 'lastname', 'orderstatus', 'ordertotal', 'ordertotal', 'sub_date', 'client', 'sex', 'addr_status', 'shipped', 'numberof', 'numberof', 'earliestsh', 'email', 'earliestde', 'fulfillmen', 'couponam', 'mi'];

// usernumber, ordertype, firstname, lastname, orderstatus, ordertotal, sub_date, sex, addr_status, shipped, numberof, email
const orders = [
    ['60525065', '1', 'Kashing', 'Tang', '0', '311.38', '7/5/2021', 'male', '0', '2', '1', 'vincent28'],
    ['72053139', '1', 'å˜¯', 'å“ˆ', '0', '7434.81', '########', 'male', '1', '2', '1', 'abc99pizza'],
    ['97737620', '1', 'Patrick', 'Chan', '0', '457.68', '9/7/2021', 'male', '0', '2', '1', 'peterbig8'],
    ['37248577', '1', 'Keith', 'Ku', '0', '0', '########', 'male', '0', '2', '1', 'keithkkku'],
    ['2376327', '1', 'Kenneth', 'Leung', '0', '210.52', '########', 'male', '0', '2', '2', 's02103046'],
    ['81393414', 'NULL', 'Eric', 'Tam', '0', '0', '########', 'male', '0', 'NULL', '1', 'holidayfis'],
    ['52302952', '1', 'Eric', 'Cheung', '0', '553.89', '1/8/2021', 'male', '0', '2', '2', 'resiinchun'],
    ['56232155', '0', 'Ngai', 'Hei', '0', '696.79', '########', 'male', '0', '2', '1', 'tonyngais'],
    ['51216557', 'NULL', 'Dj', 'C', '0', '0', '########', 'male', '0', 'NULL', '1', 'djthomasc'],
    ['63325450', 'NULL', 'Sofa', 'So', '0', '0', '########', 'female', '0', 'NULL', '1', 'sofa_314@'],
    ['66301296', '0', 'Charlotte', 'Li', '0', '6627.32', '########', 'female', '1', '2', '1', 'inky1225@'],
    ['41388535', '1', 'ä»”', 'å¾', '1', '8461.2', '3/5/2021', 'male', '0', '2', '1', 'hammertv'],
    ['30093802', '0', 'Connie', 'Yeung', '0', '25.14', '########', 'female', '0', '2', '2', 'lnyeung@'],
    ['67374470', '1', 'Marcus', 'Chiu', '1', '3483.24', '########', 'male', '0', '2', '1', 'littlefishb'],
    ['66681628', '0', 'Fsh', 'Fung', '0', '1546.34', '4/8/2021', 'male', '0', '2', '1', 'john2fsh@'],
    ['72669395', '0', 'Au', 'Chun', '0', '239.49', '6/7/2021', 'male', '1', '2', '1', 'chun-730@'],
    ['37150101', '0', 'Wan', 'Ian', '0', '0', '########', 'male', '0', '2', '1', 'wanchaky'],
    ['26113850', '1', 'Andy', 'Cheung', '0', '0', '########', 'male', '0', '2', '2', 'andy70214']
];

function kind(value) {
    if (value[0] === '#') return 'hash';
    return /^[\d./]+$/.test(value) ? 'num' : 'text';
}

const letters = document.getElementById('letters');
letters.innerHTML = '<th class="corner"></th>' + heads.map((h, i) =>
    `<th class="${i === 0 ? 'chosen' : ''}">${String.fromCharCode(65 + i)}</th>`).join('');

const cells = document.getElementById('cells');
cells.innerHTML = '<tr><th class="chosen">1</th>' + heads.map((h, i) =>
    i === 0 ? `<td class="cursor"><div>${h}</div></td>` : `<td>${h}</td>`).join('') + '</tr>';

orders.forEach((o, i) => {
    const row = [...o.slice(0, 6), 'HK$', o[6], 'u-travel.h', o[7], o[8], o[9], '0', o[10], 'NULL', o[11], 'NULL', 'NULL', 'NULL', 'NULL'];
    cells.innerHTML += `<tr><th>${i + 2}</th>` + row.map(v =>
        `<td class="${kind(v)}">${v}</td>`).join('') + '</tr>';
});
```
